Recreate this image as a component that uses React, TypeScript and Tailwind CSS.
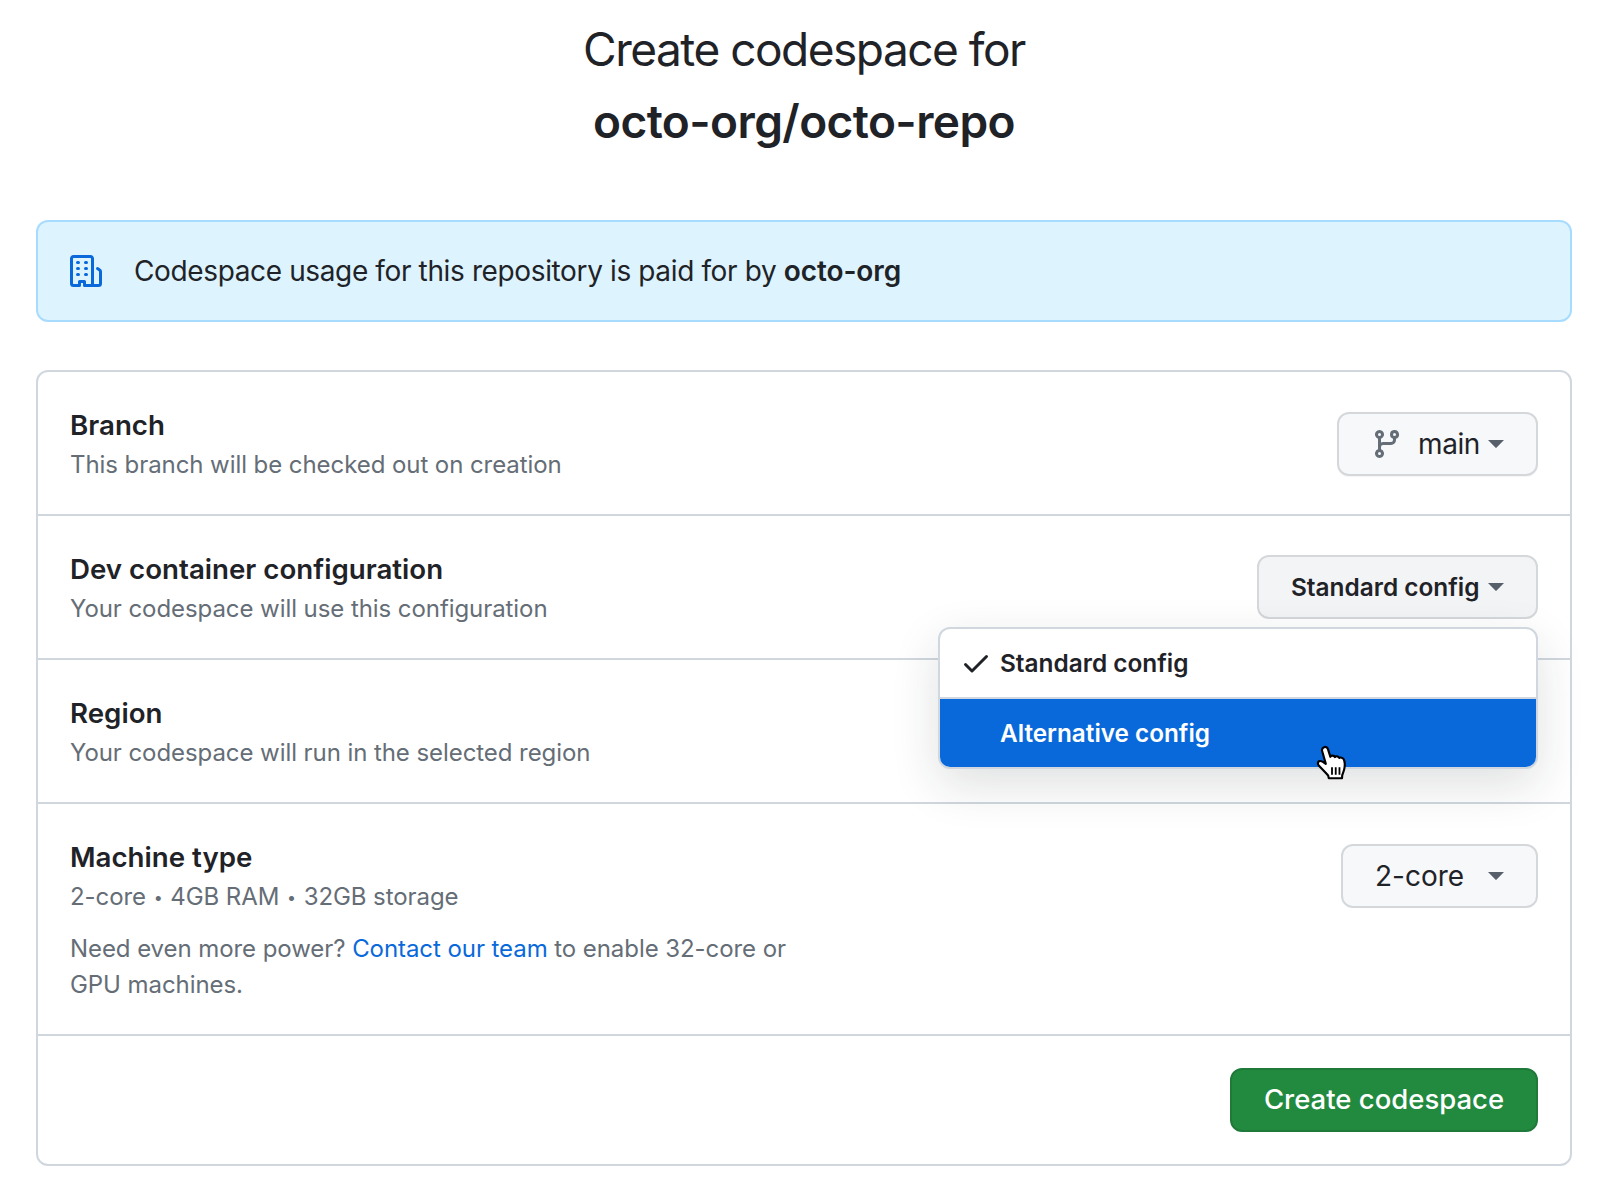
function Caret() {
  return (
    <svg width="16" height="8" viewBox="0 0 16 8" className="shrink-0">
      <path d="M0 0h16L8.6 7.6a.8.8 0 0 1-1.2 0Z" fill="#57606a" />
    </svg>
  );
}

function OrgIcon() {
  return (
    <svg width="32" height="32" viewBox="0 0 16 16" fill="#0969da" className="shrink-0">
      <path d="M1.75 16A1.75 1.75 0 0 1 0 14.25V1.75C0 .784.784 0 1.75 0h8.5C11.216 0 12 .784 12 1.75v12.5c0 .085-.006.168-.018.25h2.268a.25.25 0 0 0 .25-.25V8.285a.25.25 0 0 0-.111-.208l-1.055-.703a.749.749 0 1 1 .832-1.248l1.055.703c.487.325.779.871.779 1.456v5.965A1.75 1.75 0 0 1 14.25 16h-3.5a.766.766 0 0 1-.197-.026c-.099.017-.2.026-.303.026h-3a.75.75 0 0 1-.75-.75V14h-1v1.25a.75.75 0 0 1-.75.75Zm-.25-1.75c0 .138.112.25.25.25H4v-1.25a.75.75 0 0 1 .75-.75h2.5a.75.75 0 0 1 .75.75v1.25h2.25a.25.25 0 0 0 .25-.25V1.750a.25.25 0 0 0-.25-.25h-8.500a.25.25 0 0 0-.25.25ZM3.750 6h.5a.75.75 0 0 1 0 1.500h-.5a.75.75 0 0 1 0-1.500ZM3 3.750A.75.75 0 0 1 3.750 3h.5a.75.75 0 0 1 0 1.500h-.5A.75.75 0 0 1 3 3.750Zm4 3A.75.75 0 0 1 7.750 6h.5a.75.75 0 0 1 0 1.500h-.5A.75.75 0 0 1 7 6.750ZM7.750 3h.5a.75.75 0 0 1 0 1.500h-.5a.75.75 0 0 1 0-1.500ZM3 9.750A.75.75 0 0 1 3.750 9h.5a.75.75 0 0 1 0 1.500h-.5A.75.75 0 0 1 3 9.750ZM7.750 9h.5a.75.75 0 0 1 0 1.500h-.5a.75.75 0 0 1 0-1.500Z" />
    </svg>
  );
}

function BranchIcon() {
  return (
    <svg width="32" height="32" viewBox="0 0 16 16" fill="#656d76" className="shrink-0">
      <path d="M9.500 3.250a2.250 2.250 0 1 1 3 2.122V6A2.500 2.500 0 0 1 10 8.500H6a1 1 0 0 0-1 1v1.128a2.251 2.251 0 1 1-1.500 0V5.372a2.250 2.250 0 1 1 1.500 0v1.836A2.493 2.493 0 0 1 6 7h4a1 1 0 0 0 1-1v-.628A2.250 2.250 0 0 1 9.500 3.250Zm-6 0a.750.750 0 1 0 1.500 0 .750.750 0 0 0-1.500 0Zm8.250-.750a.750.750 0 1 0 0 1.500.750.750 0 0 0 0-1.500ZM4.250 12a.750.750 0 1 0 0 1.500.750.750 0 0 0 0-1.500Z" />
    </svg>
  );
}

function CheckIcon() {
  return (
    <svg width="32" height="32" viewBox="0 0 16 16" fill="#1f2328" className="shrink-0">
      <path d="M13.780 4.220a.750.750 0 0 1 0 1.060l-7.250 7.250a.750.750 0 0 1-1.060 0L2.220 9.280a.751.751 0 0 1 .018-1.042.751.751 0 0 1 1.042-.018L6 10.940l6.720-6.720a.750.750 0 0 1 1.060 0Z" />
    </svg>
  );
}

function HandCursor() {
  return (
    <svg width="32" height="38" viewBox="0 0 30 34" className="absolute left-[1316px] top-[744px]">
      <path
        d="M7.500 2.200c1.600-.8 3.200.2 3.700 1.800l2.300 7.200c.4-1.500 3.400-1.600 4.200.3.700-1.200 3.500-1.100 4.100.8.9-.8 3.600-.5 4.400 1.600.9 2.600.9 6.400.2 9.200-.5 2-1.200 3.400-1.800 5.200l-.2 3H12l-.6-2.600c-2-2.400-5.600-6-8.800-9.400-1.200-1.400-1-3.200.2-3.900 1.600-.9 3.600.2 6.400 2.400L5.800 6c-.5-1.600.4-3.200 1.700-3.800Z"
        fill="#fff"
        stroke="#000"
        strokeWidth="2"
        strokeLinejoin="round"
      />
      <path d="M15 21v7M18.500 21v7M22 21v7" stroke="#000" strokeWidth="1.700" />
    </svg>
  );
}

function Dot() {
  return <span className="mx-[1px] align-[2px] text-[16px]">•</span>;
}

function Row({
  title,
  desc,
  height,
  children,
}: {
  title: string;
  desc: string;
  height: string;
  children?: React.ReactNode;
}) {
  return (
    <div className={`flex justify-between border-b-2 border-[#d0d7de] px-[32px] pt-[41px] ${height}`}>
      <div>
        <h3 className="mt-[-3px] text-[27.7px] leading-[30px] font-semibold text-[#1f2328]">{title}</h3>
        <p className="mt-[7px] text-[24px] leading-[36px] tracking-[-0.07px] text-[#656d76]">{desc}</p>
      </div>
      <div>{children}</div>
    </div>
  );
}

export default function App() {
  return (
    <div className="relative h-[1192px] w-[1602px] overflow-hidden bg-white pl-[36px] pr-[30px] font-['Inter',sans-serif] text-[#1f2328]">
      <div className="pt-[13px] text-center">
        <h1 className="text-[46px] leading-[72px] font-normal tracking-[-1.5px]">Create codespace for</h1>
        <h2 className="text-[46px] leading-[72px] font-semibold tracking-[-0.6px]">octo-org/octo-repo</h2>
      </div>

      <div className="mt-[63px] flex h-[102px] items-center rounded-xl border-2 border-[#a8dcff] bg-[#ddf4ff] pl-[32px]">
        <OrgIcon />
        <p className="ml-[32px] text-[28px] leading-none tracking-[-0.37px]">
          Codespace usage for this repository is paid for by <span className="font-semibold tracking-[-0.1px]">octo-org</span>
        </p>
      </div>

      <div className="mt-[48px] h-[796px] rounded-xl border-2 border-[#d0d7de]">
        <Row title="Branch" desc="This branch will be checked out on creation" height="h-[144px]">
          <button className="mt-[-1px] flex h-[64px] w-[201px] items-center rounded-xl border-2 border-[#d5d8db] bg-[#f6f8fa] pl-[32px] text-[28px] shadow-[0_1px_0_rgba(31,35,40,0.04)]">
            <BranchIcon />
            <span className="ml-[15px] mr-[8px] tracking-[-0.4px]">main</span>
            <Caret />
          </button>
        </Row>
        <Row title="Dev container configuration" desc="Your codespace will use this configuration" height="h-[144px]">
          <button className="mt-[-2px] flex h-[64px] w-[281px] items-center justify-between rounded-xl border-2 border-[#d5d8db] bg-[#f3f4f6] px-[32px] text-[24.4px] font-semibold whitespace-nowrap">
            <span>Standard config</span>
            <Caret />
          </button>
        </Row>
        <Row title="Region" desc="Your codespace will run in the selected region" height="h-[144px]" />
        <div className="flex h-[232px] justify-between border-b-2 border-[#d0d7de] px-[32px] pt-[41px]">
          <div>
            <h3 className="mt-[-3px] text-[27.7px] leading-[30px] font-semibold">Machine type</h3>
            <p className="mt-[7px] text-[24px] leading-[36px] tracking-[-0.07px] text-[#656d76]">
              2-core <Dot /> 4GB RAM <Dot /> 32GB storage
            </p>
            <p className="mt-[16px] w-[740px] text-[24px] leading-[36px] tracking-[-0.07px] text-[#656d76]">
              Need even more power? <span className="text-[#0969da]">Contact our team</span> to enable 32-core or GPU machines.
            </p>
          </div>
          <button className="mt-[-1px] flex h-[64px] w-[197px] items-center justify-between rounded-xl border-2 border-[#d5d8db] bg-[#f6f8fa] px-[32px] text-[28px]">
            <span>2-core</span>
            <Caret />
          </button>
        </div>
        <div className="flex justify-end px-[32px] pt-[32px]">
          <button className="flex h-[64px] w-[308px] items-center justify-center rounded-xl border-2 border-[#1f7a3a] bg-[#218a3f] text-[27.5px] font-medium text-white">
            Create codespace
          </button>
        </div>
      </div>

      <div className="absolute left-[938px] top-[627px] w-[600px] rounded-xl border-2 border-[#d0d7de] bg-white shadow-[0_16px_48px_rgba(31,35,40,0.14)]">
        <div className="flex h-[70px] items-center border-b-2 border-[#d0d7de] pl-[20px]">
          <CheckIcon />
          <span className="ml-[8px] text-[24.4px] font-semibold">Standard config</span>
        </div>
        <div className="flex h-[68px] items-center rounded-b-[10px] bg-[#0969da] pl-[60px] text-[24.3px] font-semibold text-white">
          Alternative config
        </div>
      </div>
      <HandCursor />
    </div>
  );
}
